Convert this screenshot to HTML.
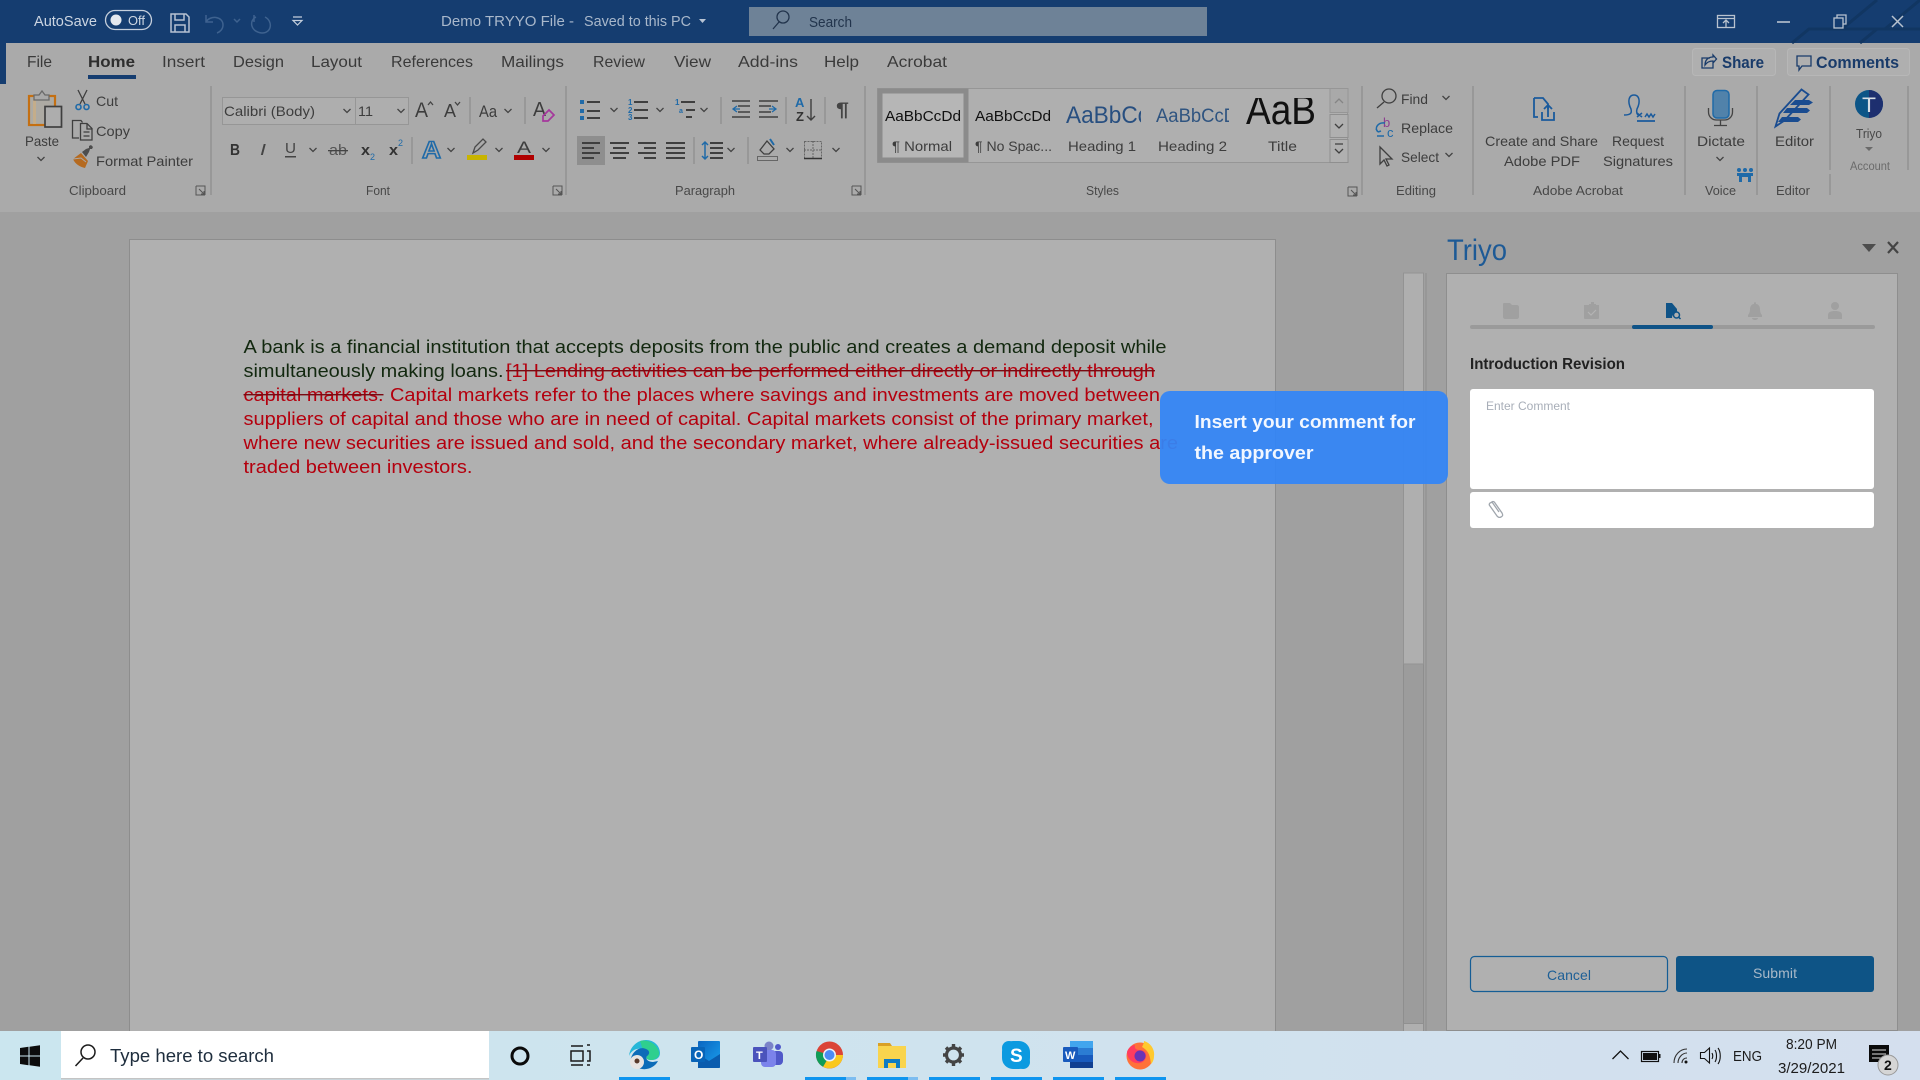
<!DOCTYPE html>
<html lang="en"><head><meta charset="utf-8"><title>Demo TRYYO File - Word</title>
<style>
html,body{margin:0;padding:0;width:1920px;height:1080px;overflow:hidden;background:#a0a0a0}
svg{display:block;position:absolute;left:0;top:0}
text{font-family:"Liberation Sans",Arial,sans-serif;white-space:pre}
.r{font-size:14px;fill:#3d3d3d}
.l{font-size:13px;fill:#484848}
.tab{font-size:16px;fill:#3a3a3a}
.ln{stroke:#3f3f3f;stroke-width:2;fill:none}
.ch{stroke:#444;stroke-width:1.3;fill:none}
.sep{stroke:#8f8f8f;stroke-width:1.3}
.d{font-size:18.8px}
.ic{fill:#a0a0a0}
</style></head><body>
<svg width="1920" height="1080" viewBox="0 0 1920 1080" xmlns="http://www.w3.org/2000/svg">
<defs>
<path id="chev" d="M-3.5-2L0 1.5 3.5-2" stroke="#444" stroke-width="1.3" fill="none"/>
<g id="lau"><path d="M0 0h9v9M0 0v9h9" fill="none" stroke="#555" stroke-width="1"/><path d="M3 3l5 5M5 8h3V5" fill="none" stroke="#555" stroke-width="1"/></g>
</defs>
<!-- base -->
<rect width="1920" height="1080" fill="#a0a0a0"/>
<rect y="43" width="1920" height="170" fill="#aaaaaa"/>
<rect y="212" width="1920" height="2" fill="#a0a0a0"/>
<rect x="0" y="0" width="1920" height="43" fill="#153d70"/>
<rect x="0" y="43" width="6" height="41" fill="#153d70"/>
<g stroke="#113662" stroke-width="3" fill="none"><path d="M1792 43l17-14H1920M1860 43l17-14M1885 29l35-29M1842 29l35-29"/></g>

<!-- title bar -->
<g fill="#cdd6e2">
<text x="34" y="26" font-size="15" textLength="63" lengthAdjust="spacingAndGlyphs">AutoSave</text>
<rect x="105.500" y="10.500" width="46" height="19" rx="9.500" fill="none" stroke="#c5cfdc" stroke-width="1.3"/>
<circle cx="116" cy="20" r="5.500" fill="#e4e8ee"/>
<text x="128" y="25" font-size="12.500" textLength="17" lengthAdjust="spacingAndGlyphs">Off</text>
</g>
<g fill="none" stroke="#b6c2d2" stroke-width="1.500"><path d="M171 14h15l3 3v15h-18zM175 14v6h9v-6M175 32v-7h10v7"/></g>
<g fill="none" stroke="#3e628f" stroke-width="1.500"><path d="M206 15v7h7M206 22c4-7 17-6 17 3 0 4-3 7-6 8M234 19l3 3 3-3M254 15v7M256 17c-7 3-6 15 6 16 10 0 11-12 3-16"/></g>
<g fill="none" stroke="#c5cfdc" stroke-width="1.200"><path d="M293 17h9M293 20.500h9l-4.500 4.500z"/></g>
<text x="441" y="26" font-size="15" fill="#a9b8cb" textLength="133" lengthAdjust="spacingAndGlyphs">Demo TRYYO File -</text>
<text x="584" y="26" font-size="15" fill="#a9b8cb" textLength="107" lengthAdjust="spacingAndGlyphs">Saved to this PC</text>
<path d="M699 19h7l-3.500 4z" fill="#b8c4d4"/>
<rect x="749" y="7" width="458" height="29" fill="#6e8297"/>
<g fill="none" stroke="#22344c" stroke-width="1.300"><circle cx="783" cy="17" r="6"/><path d="M779 22l-6 7"/></g>
<text x="809" y="27" font-size="14.500" fill="#22344c" textLength="43" lengthAdjust="spacingAndGlyphs">Search</text>
<g fill="none" stroke="#b9c3cf" stroke-width="1.300"><rect x="1717.500" y="15.500" width="17" height="12"/><path d="M1717.500 18.500h17M1726 27v-6M1723 23l3-3 3 3"/>
<path d="M1777 22h13" stroke-width="1.600"/><rect x="1834" y="18" width="9" height="10"/><path d="M1837 18v-3h9v9h-3"/>
<path d="M1892 16l11 11M1903 16l-11 11" stroke-width="1.500"/></g>

<!-- tabs -->
<g class="tab">
<text x="27" y="67" textLength="25" lengthAdjust="spacingAndGlyphs">File</text>
<text x="88" y="67" font-weight="700" fill="#2e2e2e" textLength="47" lengthAdjust="spacingAndGlyphs">Home</text>
<text x="162" y="67" textLength="43" lengthAdjust="spacingAndGlyphs">Insert</text>
<text x="233" y="67" textLength="51" lengthAdjust="spacingAndGlyphs">Design</text>
<text x="311" y="67" textLength="51" lengthAdjust="spacingAndGlyphs">Layout</text>
<text x="391" y="67" textLength="82" lengthAdjust="spacingAndGlyphs">References</text>
<text x="501" y="67" textLength="63" lengthAdjust="spacingAndGlyphs">Mailings</text>
<text x="593" y="67" textLength="52" lengthAdjust="spacingAndGlyphs">Review</text>
<text x="674" y="67" textLength="37" lengthAdjust="spacingAndGlyphs">View</text>
<text x="738" y="67" textLength="60" lengthAdjust="spacingAndGlyphs">Add-ins</text>
<text x="824" y="67" textLength="35" lengthAdjust="spacingAndGlyphs">Help</text>
<text x="887" y="67" textLength="60" lengthAdjust="spacingAndGlyphs">Acrobat</text>
</g>
<rect x="88" y="75" width="48" height="4" fill="#153d70"/>
<!-- share/comments -->
<rect x="1692.500" y="48.500" width="83" height="27" rx="3" fill="#afafaf" stroke="#b7b7b7"/>
<rect x="1787.500" y="48.500" width="122" height="27" rx="3" fill="#afafaf" stroke="#b7b7b7"/>
<g fill="none" stroke="#193b6a" stroke-width="1.300"><path d="M1710 58h-8v10h11v-6M1705 65c0-5 3-8 8-8v-2l3.500 4-3.500 4v-2c-3 0-6 1-8 4z"/><path d="M1797 56h14v10h-9l-3 4v-4h-2z"/></g>
<text x="1722" y="68" font-size="16.500" font-weight="700" fill="#193b6a" textLength="42" lengthAdjust="spacingAndGlyphs">Share</text>
<text x="1816" y="68" font-size="16.500" font-weight="700" fill="#193b6a" textLength="83" lengthAdjust="spacingAndGlyphs">Comments</text>

<!-- separators -->
<g class="sep"><path d="M211 86v109M566 86v109M865 86v109M1362 86v109M1473 86v109M1685 86v109M1757 86v109M1830 86v84M1830 174v21M1908 86v84"/></g>

<!-- Clipboard -->
<rect x="29" y="96" width="26" height="29" fill="#adaaa3" stroke="#c46f12" stroke-width="2.200"/>
<rect x="33" y="97" width="3" height="27" fill="#c4ad8a"/>
<path d="M34 100v-5h5l3-4 3 4h4v5z" fill="#a9a9a9" stroke="#6a6a6a" stroke-width="1.300"/>
<rect x="45" y="106.500" width="16.500" height="20.500" fill="#adadad" stroke="#3f3f3f" stroke-width="1.700"/>
<text x="25" y="146" class="r" textLength="34" lengthAdjust="spacingAndGlyphs">Paste</text>
<use href="#chev" x="41" y="159"/>
<g fill="none" stroke="#3f3f3f" stroke-width="1.300"><path d="M78 90l7 14M87 90l-7 14"/></g>
<g fill="none" stroke="#1f6aa8" stroke-width="1.600"><circle cx="78.500" cy="107" r="2.500"/><circle cx="86.500" cy="107" r="2.500"/></g>
<g fill="none" stroke="#3f3f3f" stroke-width="1.300"><path d="M79 138h-6.500v-17.500h8.500l1.500 2"/><path d="M80.500 123.500h6.500l5 5v11.500h-11.500z"/><path d="M87 124v5h5M83.500 132h6M83.500 136h6"/></g>
<path d="M73 159l8-6 7 8-3 7c-5-1-10-4-12-9z" fill="#b56a20"/>
<path d="M73 159l8-1 5 4" fill="none" stroke="#a9a9a9" stroke-width="1"/>
<path d="M82 152l4-3 3-1 0-2 2-1 2 2-1 2-2 0-1 3-3 5z" fill="#4d4d4d"/>
<text x="96" y="106" class="r" textLength="22" lengthAdjust="spacingAndGlyphs">Cut</text>
<text x="96" y="136" class="r" textLength="34" lengthAdjust="spacingAndGlyphs">Copy</text>
<text x="96" y="166" class="r" textLength="97" lengthAdjust="spacingAndGlyphs">Format Painter</text>
<text x="69" y="195" class="l" textLength="57" lengthAdjust="spacingAndGlyphs">Clipboard</text>
<use href="#lau" x="196" y="186"/>

<!-- Font -->
<rect x="222.500" y="97.500" width="133" height="27" fill="#aeaeae" stroke="#969696"/>
<rect x="355.500" y="97.500" width="53" height="27" fill="#aeaeae" stroke="#969696"/>
<text x="224" y="116" class="r" font-size="14.500" fill="#333" textLength="91" lengthAdjust="spacingAndGlyphs">Calibri (Body)</text>
<use href="#chev" x="347" y="111"/>
<text x="358" y="116" class="r" fill="#333" textLength="15" lengthAdjust="spacingAndGlyphs">11</text>
<use href="#chev" x="401" y="111"/>
<g fill="#3d3d3d" font-size="20">
<text x="415" y="117" font-size="21" textLength="13" lengthAdjust="spacingAndGlyphs">A</text>
<text x="444" y="117" font-size="18" textLength="12" lengthAdjust="spacingAndGlyphs">A</text>
<text x="479" y="117" font-size="17" textLength="18" lengthAdjust="spacingAndGlyphs">Aa</text>
<text x="533" y="116" font-size="20" textLength="13" lengthAdjust="spacingAndGlyphs">A</text>
</g>
<path d="M428 105l2.500-3 2.500 3" class="ch" stroke="#1f6aa8"/><path d="M455 102l2.500 3 2.500-3" class="ch" stroke="#1f6aa8"/>
<use href="#chev" x="508" y="111"/>
<path d="M543 116l6-6 5 5-6 6h-5z" fill="none" stroke="#a5379c" stroke-width="1.700"/>
<g class="sep"><path d="M470 97v27M525 97v27M412 137v27"/></g>
<text x="230" y="155" font-size="16" font-weight="700" fill="#333" textLength="10" lengthAdjust="spacingAndGlyphs">B</text>
<text x="260" y="155" font-size="16" font-style="italic" fill="#444" textLength="6" lengthAdjust="spacingAndGlyphs">I</text>
<text x="285" y="153" font-size="15" fill="#444" textLength="11" lengthAdjust="spacingAndGlyphs">U</text>
<rect x="285" y="156" width="11" height="1.500" fill="#444"/>
<use href="#chev" x="313" y="150"/>
<text x="329" y="155" font-size="15" fill="#555" textLength="18" lengthAdjust="spacingAndGlyphs">ab</text>
<rect x="328" y="150" width="20" height="1.300" fill="#444"/>
<text x="361" y="155" font-size="15" font-weight="700" fill="#333" textLength="9" lengthAdjust="spacingAndGlyphs">x</text>
<text x="370" y="160" font-size="9" fill="#1f6aa8">2</text>
<text x="389" y="155" font-size="15" font-weight="700" fill="#333" textLength="9" lengthAdjust="spacingAndGlyphs">x</text>
<text x="398" y="146" font-size="9" fill="#1f6aa8">2</text>
<text x="422" y="158" font-size="24" font-weight="700" fill="#a9a9a9" stroke="#1f6aa8" stroke-width="1.500" textLength="19" lengthAdjust="spacingAndGlyphs">A</text>
<use href="#chev" x="451" y="150"/>
<path d="M473 153l2-6 8-8 3 3-8 8z" fill="none" stroke="#4a4a4a" stroke-width="1.300"/>
<rect x="467" y="155" width="20" height="5" fill="#c8b400"/>
<use href="#chev" x="499" y="150"/>
<text x="517" y="153" font-size="17" fill="#3d3d3d" textLength="14" lengthAdjust="spacingAndGlyphs">A</text>
<rect x="514" y="155" width="20" height="5" fill="#b00000"/>
<use href="#chev" x="546" y="150"/>
<text x="366" y="195" class="l" textLength="24" lengthAdjust="spacingAndGlyphs">Font</text>
<use href="#lau" x="553" y="186"/>

<!-- Paragraph -->
<g fill="#1f6aa8"><rect x="580" y="100" width="4" height="4"/><rect x="580" y="109" width="4" height="4"/><rect x="580" y="116" width="4" height="4"/>
<text x="628" y="105" font-size="8" font-weight="700">1</text><text x="628" y="113" font-size="8" font-weight="700">2</text><text x="628" y="120" font-size="8" font-weight="700">3</text>
<text x="675" y="105" font-size="8" font-weight="700">1</text><text x="679" y="113" font-size="7" font-weight="700">a</text></g>
<g class="ln"><path d="M587 102h13M587 111h13M587 118h13M634 102h14M634 110h14M634 118h14M681 102h14M686 110h9M686 117h6"/>
<path d="M732 101h18M738 106h12M738 112h12M732 117h18M759 101h19M759 117h19M759 106h12M759 112h12" stroke-width="1.600"/></g>
<path d="M737 106l-4 3 4 3M733 109h7M772 106l4 3-4 3M769 109h7" fill="none" stroke="#1f6aa8" stroke-width="1.300"/>
<use href="#chev" x="614" y="110"/><use href="#chev" x="660" y="110"/><use href="#chev" x="704" y="110"/>
<text x="795" y="107" font-size="13" font-weight="700" fill="#1f6aa8">A</text><text x="796" y="121" font-size="13" font-weight="700" fill="#333">Z</text>
<path d="M811 99v21M807 116l4 4 4-4" fill="none" stroke="#3f3f3f" stroke-width="1.400"/>
<text x="836" y="116" font-size="19" fill="#444" font-weight="700" textLength="13" lengthAdjust="spacingAndGlyphs">¶</text>
<g class="sep"><path d="M721 97v27M786 97v27M825 97v27M694 137v27M748 137v27"/></g>
<rect x="577" y="136" width="28" height="29" fill="#8e8e8e"/>
<g class="ln" stroke-width="1.700"><path d="M582 143h18M582 148h12M582 153h18M582 158h12M610 143h19M613 148h13M610 153h19M613 158h13M638 143h18M644 148h12M638 153h18M644 158h12M666 143h19M666 148h19M666 153h19M666 158h19M710 143h13M710 148h13M710 153h13M710 158h13"/></g>
<path d="M705 142v17M702 145l3-3 3 3M702 156l3 3 3-3" fill="none" stroke="#1f6aa8" stroke-width="1.500"/>
<use href="#chev" x="731" y="150"/>
<path d="M760 150l7-9 7 8-5 5h-5z" fill="none" stroke="#3f3f3f" stroke-width="1.300"/><rect x="757.500" y="156.500" width="20" height="4" fill="none" stroke="#666"/>
<path d="M770 139l4 6" stroke="#1f6aa8" stroke-width="2"/>
<use href="#chev" x="790" y="150"/>
<g fill="none" stroke="#666" stroke-width="1" stroke-dasharray="2 1"><rect x="804.500" y="141.500" width="17" height="17"/><path d="M813 141v17M804 150h18"/></g><path d="M804 158.500h18" stroke="#333" stroke-width="1.500"/>
<use href="#chev" x="836" y="150"/>
<text x="675" y="195" class="l" textLength="60" lengthAdjust="spacingAndGlyphs">Paragraph</text>
<use href="#lau" x="852" y="186"/>

<!-- Styles -->
<rect x="877.500" y="88.500" width="470" height="74" fill="#afafaf" stroke="#969696"/>
<rect x="880" y="91" width="86" height="69" fill="#b6b6b6" stroke="#8b8b8b" stroke-width="5"/>
<text x="885" y="121" font-size="15" fill="#111" textLength="76" lengthAdjust="spacingAndGlyphs">AaBbCcDd</text>
<text x="892" y="151" class="r" fill="#505050" textLength="60" lengthAdjust="spacingAndGlyphs">¶ Normal</text>
<text x="975" y="121" font-size="15" fill="#111" textLength="76" lengthAdjust="spacingAndGlyphs">AaBbCcDd</text>
<text x="975" y="151" class="r" fill="#505050" textLength="77" lengthAdjust="spacingAndGlyphs">¶ No Spac...</text>
<svg x="1060" y="95" width="81" height="40" viewBox="1060 95 81 40"><text x="1066" y="123" font-size="24" fill="#284f80" textLength="83" lengthAdjust="spacingAndGlyphs">AaBbCc</text></svg>
<text x="1068" y="151" class="r" fill="#505050" textLength="68" lengthAdjust="spacingAndGlyphs">Heading 1</text>
<svg x="1150" y="95" width="79" height="40" viewBox="1150 95 79 40"><text x="1156" y="122" font-size="19" fill="#2f5480" textLength="81" lengthAdjust="spacingAndGlyphs">AaBbCcD</text></svg>
<text x="1158" y="151" class="r" fill="#505050" textLength="69" lengthAdjust="spacingAndGlyphs">Heading 2</text>
<svg x="1240" y="98" width="85" height="34" viewBox="1240 98 85 34"><text x="1246" y="124" font-size="42" fill="#111" textLength="70" lengthAdjust="spacingAndGlyphs">AaB</text></svg>
<text x="1268" y="151" class="r" fill="#505050" textLength="29" lengthAdjust="spacingAndGlyphs">Title</text>
<rect x="1330" y="88.500" width="18" height="24" fill="#a9a9a9" stroke="#969696"/>
<rect x="1330" y="114.500" width="18" height="23" fill="#b0b0b0" stroke="#8f8f8f"/>
<rect x="1330" y="139.500" width="18" height="23" fill="#b0b0b0" stroke="#8f8f8f"/>
<path d="M1335 103l4-4 4 4" fill="none" stroke="#858585" stroke-width="1.300"/>
<path d="M1335 124l4 4 4-4M1335 144h8M1335 149l4 4 4-4" fill="none" stroke="#3f3f3f" stroke-width="1.300"/>
<text x="1086" y="195" class="l" textLength="33" lengthAdjust="spacingAndGlyphs">Styles</text>
<use href="#lau" x="1348" y="187"/>

<!-- Editing -->
<g fill="none" stroke="#3f3f3f" stroke-width="1.300"><circle cx="1389" cy="96" r="7"/><path d="M1384 102l-7 6"/>
<path d="M1380 147v17l4-4 3 6 2-1-3-6h6z"/></g>
<text x="1383" y="127" font-size="13" fill="#8e3f90">b</text>
<text x="1387" y="137" font-size="13" fill="#1f6aa8">c</text>
<path d="M1385 123c-7-1-11 5-7 9M1378 132l-2-3M1378 132l3-1M1377 136h7" fill="none" stroke="#1f6aa8" stroke-width="1.500"/>
<g class="r"><text x="1401" y="104" textLength="27" lengthAdjust="spacingAndGlyphs">Find</text>
<text x="1401" y="133" textLength="52" lengthAdjust="spacingAndGlyphs">Replace</text>
<text x="1401" y="162" textLength="38" lengthAdjust="spacingAndGlyphs">Select</text></g>
<use href="#chev" x="1446" y="98"/><use href="#chev" x="1449" y="155"/>
<text x="1396" y="195" class="l" textLength="40" lengthAdjust="spacingAndGlyphs">Editing</text>

<!-- Acrobat -->
<g fill="none" stroke="#1a5a9c" stroke-width="1.800"><path d="M1534 98h9l5 6v5M1534 98v19h4"/><path d="M1542 112v8h12v-8M1548 117v-12M1544 109l4-4 4 4"/></g>
<g fill="none" stroke="#1a5a9c" stroke-width="1.500"><path d="M1624 115c7 0 8-2 7-6-4-8-2-14 3-14s7 6 3 14c-1 3 0 6 2 6"/><path d="M1637 113l5 4M1642 113l-5 4M1645 117l2-3 2 3 2-3 2 3 2-3"/><path d="M1637 121h18" stroke-width="1.800"/></g>
<g class="r"><text x="1485" y="146" textLength="113" lengthAdjust="spacingAndGlyphs">Create and Share</text>
<text x="1504" y="166" textLength="76" lengthAdjust="spacingAndGlyphs">Adobe PDF</text>
<text x="1612" y="146" textLength="52" lengthAdjust="spacingAndGlyphs">Request</text>
<text x="1603" y="166" textLength="70" lengthAdjust="spacingAndGlyphs">Signatures</text></g>
<text x="1533" y="195" class="l" textLength="90" lengthAdjust="spacingAndGlyphs">Adobe Acrobat</text>

<!-- Dictate -->
<rect x="1713" y="90.500" width="16" height="27.500" rx="4" fill="#5182aa" stroke="#1f6aa8" stroke-width="1.500"/>
<path d="M1708.500 108v4c0 5 4 8 8 8h8c4 0 8-3 8-8v-4M1720.500 120v5M1714 125.500h13" fill="none" stroke="#444" stroke-width="1.300"/>
<text x="1697" y="146" class="r" textLength="48" lengthAdjust="spacingAndGlyphs">Dictate</text>
<use href="#chev" x="1720" y="159"/>
<g fill="#1f6aa8"><circle cx="1739" cy="170" r="2"/><circle cx="1745" cy="170" r="2"/><circle cx="1751" cy="170" r="2"/><path d="M1737 173h16v3h-2v6h-3v-5h-6v5h-3v-6h-2z"/></g>
<text x="1705" y="195" class="l" textLength="31" lengthAdjust="spacingAndGlyphs">Voice</text>
<!-- Editor -->
<path d="M1775.500 126.500l4-13 22-24 7 5-24 26z" fill="#a9a9a9" stroke="#1a4c90" stroke-width="1.800"/>
<path d="M1795 100h14l4 2.500-4 2.500h-19zM1787 108h20l3 2.500-3 2.500h-24zM1782 117h16l3 2.500-3 2.500h-20z" fill="#1a4c90"/>
<text x="1775" y="146" class="r" textLength="39" lengthAdjust="spacingAndGlyphs">Editor</text>
<text x="1776" y="195" class="l" textLength="34" lengthAdjust="spacingAndGlyphs">Editor</text>
<!-- Triyo -->
<circle cx="1869" cy="104" r="14" fill="#0c5587"/>
<path d="M1869 90a14 14 0 0 1 0 28z" fill="#1d2f6f"/>
<text x="1862" y="112" font-size="21" fill="#d6dde4" textLength="14" lengthAdjust="spacingAndGlyphs">T</text>
<text x="1856" y="138" class="l" fill="#333" textLength="26" lengthAdjust="spacingAndGlyphs">Triyo</text>
<path d="M1865 147h8l-4 4z" fill="#6a6a6a"/>
<text x="1850" y="170" font-size="11.500" fill="#6b6b6b" textLength="40" lengthAdjust="spacingAndGlyphs">Account</text>

<!-- Document -->
<rect x="129.500" y="239.500" width="1146" height="795" fill="#b0b0b0" stroke="#8d8d8d"/>
<g class="d" fill="#12280f">
<text x="243.500" y="353" textLength="923" lengthAdjust="spacingAndGlyphs">A bank is a financial institution that accepts deposits from the public and creates a demand deposit while</text>
<text x="243.500" y="377" textLength="260" lengthAdjust="spacingAndGlyphs">simultaneously making loans.</text>
</g>
<g class="d" fill="#b4000e">
<text x="506" y="377" textLength="649" lengthAdjust="spacingAndGlyphs">[1] Lending activities can be performed either directly or indirectly through</text>
<text x="243.500" y="401" textLength="140" lengthAdjust="spacingAndGlyphs">capital markets.</text>
<text x="390" y="401" textLength="770" lengthAdjust="spacingAndGlyphs">Capital markets refer to the places where savings and investments are moved between</text>
<text x="243.500" y="425" textLength="910" lengthAdjust="spacingAndGlyphs">suppliers of capital and those who are in need of capital. Capital markets consist of the primary market,</text>
<text x="243.500" y="449" textLength="934.500" lengthAdjust="spacingAndGlyphs">where new securities are issued and sold, and the secondary market, where already-issued securities are</text>
<text x="243.500" y="473" textLength="229" lengthAdjust="spacingAndGlyphs">traded between investors.</text>
</g>
<rect x="506" y="370" width="649" height="1.400" fill="#7a0a12"/>
<rect x="243.500" y="394" width="140" height="1.400" fill="#7a0a12"/>

<!-- Scrollbar -->
<rect x="1403.500" y="273" width="20" height="758" fill="#9c9c9c" stroke="#8e8e8e"/>
<rect x="1403.500" y="273" width="20" height="391" fill="#afafaf" stroke="#939393"/>
<rect x="1403.500" y="1023.500" width="20" height="10" fill="#afafaf" stroke="#909090"/>
<path d="M1426 273v760" stroke="#8e8e8e"/>

<!-- Triyo pane -->
<text x="1447" y="260" font-size="30" fill="#1d5a96" textLength="60" lengthAdjust="spacingAndGlyphs">Triyo</text>
<path d="M1862 244h14l-7 8z" fill="#4d4d4d"/>
<path d="M1888 242l10 11M1898 242l-10 11" stroke="#444" stroke-width="2.200" fill="none"/>
<rect x="1446.500" y="273.500" width="451" height="757" fill="#b0b0b0" stroke="#8e8e8e"/>
<!-- pane tabs -->
<path d="M1503 304c0-1 1-1 2-1h5l2 2h5c1 0 2 1 2 2v10c0 1-1 2-2 2h-12c-1 0-2-1-2-2z" class="ic"/>
<path d="M1586 305h3v-1h2v-2h3v2h2v1h3v13c0 1-1 1-2 1h-11c-1 0-2 0-2-1v-13z" class="ic"/><path d="M1588 312l3 3 5-5" fill="none" stroke="#b4b4b4" stroke-width="1.200"/>
<path d="M1666 303h6l5 6v3c-3 1-5 3-5 6h-6z" fill="#0f5387"/><circle cx="1676.500" cy="315" r="3" fill="none" stroke="#0f5387" stroke-width="1.500"/><path d="M1678.500 317l2 2" stroke="#0f5387" stroke-width="1.500"/>
<path d="M1748 315c1-1 2-3 2-6 0-3 2-5 4-5 0-2 1-2 1-2s1 0 1 2c2 0 4 2 4 5 0 3 1 5 2 6v2h-14zM1752 318h6c0 1-1 2-3 2s-3-1-3-2z" class="ic"/>
<circle cx="1835" cy="306" r="4" class="ic"/><path d="M1828 319v-4c0-3 3-4 7-4s7 1 7 4v4z" class="ic"/>
<rect x="1470" y="325" width="405" height="4" rx="2" fill="#9a9a9a"/>
<rect x="1632" y="325" width="81" height="4" rx="2" fill="#0f5387"/>
<text x="1470" y="369" font-size="15.500" font-weight="700" fill="#222" textLength="155" lengthAdjust="spacingAndGlyphs">Introduction Revision</text>
<rect x="1470" y="389" width="404" height="100" rx="3" fill="#fff"/>
<text x="1486" y="410" font-size="12" fill="#a8aeb8" textLength="84" lengthAdjust="spacingAndGlyphs">Enter Comment</text>
<rect x="1470" y="492" width="404" height="36" rx="3" fill="#fff"/>
<path d="M1491 503c1-2 3-2 4 0l7 10c1 2 1 3-1 4s-3 0-4-1l-7-10c-1-1-1-2 0-3l2-1 7 10" fill="none" stroke="#a0a6ad" stroke-width="1.300"/>
<rect x="1470.500" y="956.500" width="197" height="35" rx="4" fill="none" stroke="#155d95" stroke-width="1.200"/>
<text x="1547" y="980" font-size="14" fill="#1d5f96" textLength="44" lengthAdjust="spacing">Cancel</text>
<rect x="1676" y="956" width="198" height="36" rx="3" fill="#0e5486"/>
<text x="1753" y="978" font-size="14" fill="#a9b9c8" textLength="44" lengthAdjust="spacing">Submit</text>

<!-- Tooltip -->
<rect x="1160" y="391" width="288" height="93" rx="10" fill="#3385f5" fill-opacity=".94"/>
<text x="1194.500" y="428" font-size="18.500" font-weight="700" fill="#f2f7ff" textLength="221" lengthAdjust="spacingAndGlyphs">Insert your comment for</text>
<text x="1194.500" y="459" font-size="18.500" font-weight="700" fill="#f2f7ff" textLength="119" lengthAdjust="spacingAndGlyphs">the approver</text>

<!-- Taskbar -->
<defs><linearGradient id="tb" x1="0" x2="1"><stop offset="0" stop-color="#cbe6ef"/><stop offset=".5" stop-color="#cfe3ee"/><stop offset="1" stop-color="#d4dfee"/></linearGradient>
<linearGradient id="ol" x1="0" x2="1" y2="1"><stop offset="0" stop-color="#0a65c0"/><stop offset="1" stop-color="#1aa0ee"/></linearGradient></defs>
<rect y="1031" width="1920" height="49" fill="url(#tb)"/>
<path d="M20 1048l8.500-1.200v8.700H20zM29.500 1046.700l10.500-1.500v10.300H29.500zM20 1056.500h8.500v8.700L20 1064zM29.500 1056.500H40v10.300l-10.500-1.500z" fill="#0c0c0c"/>
<rect x="61" y="1031" width="428" height="48" fill="#fff"/><rect x="61" y="1078" width="428" height="1.500" fill="#c4c4c4"/>
<g fill="none" stroke="#1b1b1b" stroke-width="1.500"><circle cx="88" cy="1052" r="7"/><path d="M83 1058l-7.500 8"/></g>
<text x="110" y="1062" font-size="18" fill="#1e2d3d" textLength="164" lengthAdjust="spacingAndGlyphs">Type here to search</text>
<circle cx="520" cy="1056" r="8" fill="none" stroke="#0a0a0a" stroke-width="3"/>
<g fill="none" stroke="#1a1a1a" stroke-width="1.500"><path d="M571 1046h12M571 1065h12M571 1051h12v10h-12z" /><path d="M587 1045h3M587 1051h3v10h-3M587 1065h3"/></g>
<!-- edge -->
<path d="M629 1056c1-10 9-16 17-16 8 0 14 6 14 13 0 5-4 7-8 7-5 0-6-2-5-4 1-1 0-6-6-7-5-1-10 2-12 7z" fill="#27b7d8"/>
<path d="M640 1041c8-2 17 3 19 11 1 5-4 8-8 8-5 0-5-2-4-4 1-1 0-5-4-6z" fill="#2fcf8e"/>
<path d="M631 1058c2-7 9-12 15-9 5 2 3 6 1 7-2 3 1 6 6 6l5-1c-3 6-10 9-16 8-7-1-12-6-11-11z" fill="#0d6cb8"/>
<circle cx="637" cy="1062" r="7" fill="#e8e4e2"/><circle cx="637" cy="1061" r="2.500" fill="#5a3a2a"/>
<!-- outlook -->
<rect x="698" y="1041" width="22" height="27" rx="1" fill="url(#ol)"/><path d="M698 1054l11 7 11-7v13c0 1-1 1-1 1h-21z" fill="#0a5cae"/><rect x="691" y="1047" width="14" height="15" rx="1" fill="#0864b8"/>
<text x="694" y="1059" font-size="12" font-weight="700" fill="#fff">O</text>
<!-- teams -->
<circle cx="769" cy="1046" r="4.500" fill="#7b83c9"/><circle cx="778" cy="1047" r="3" fill="#5059c9"/><rect x="772" y="1051" width="11" height="14" rx="4" fill="#5059c9"/><rect x="761" y="1050" width="15" height="17" rx="4" fill="#7b83eb"/><rect x="753" y="1047" width="14" height="15" rx="1" fill="#4b53bc"/>
<text x="756" y="1059" font-size="11" font-weight="700" fill="#fff">T</text>
<!-- chrome -->
<circle cx="829.500" cy="1055" r="13.500" fill="#db4437"/>
<path d="M843 1055a13.500 13.500 0 0 1-20 11.700l7-11.700z" fill="#f9c81e"/>
<path d="M816.500 1051a13.500 13.500 0 0 0 6.500 15.700l7-11.700z" fill="#0f9d58"/>
<circle cx="829.500" cy="1055" r="6.500" fill="#eaf2fa"/><circle cx="829.500" cy="1055" r="5" fill="#4c8bf5"/>
<!-- files -->
<path d="M878 1043h12l2 3h-14z" fill="#d9a026"/><rect x="878" y="1046" width="28" height="22" fill="#f9d44d"/><path d="M884 1068v-9h16v9h-4v-5h-8v5z" fill="#0f7bc4"/>
<!-- settings -->
<circle cx="953.500" cy="1055" r="7" fill="none" stroke="#444" stroke-width="3.200"/>
<path d="M953.500 1044v4M953.500 1062v4M943 1055h4M960 1055h4M946 1047.500l3 3M958 1059.500l3 3M961 1047.500l-3 3M949 1059.500l-3 3" stroke="#444" stroke-width="3.400"/>
<!-- skype -->
<rect x="1002" y="1041" width="28" height="28" rx="11" fill="#0c9ae0"/><circle cx="1009" cy="1048" r="7" fill="#0c9ae0"/><circle cx="1023" cy="1062" r="7" fill="#0c9ae0"/>
<text x="1010" y="1062" font-size="19" font-weight="700" fill="#fff">S</text>
<!-- word -->
<rect x="1070" y="1041" width="23" height="27" rx="1" fill="#2b7cd3"/><rect x="1070" y="1041" width="23" height="7" fill="#41a5ee"/><rect x="1070" y="1055" width="23" height="7" fill="#185abd"/><rect x="1070" y="1062" width="23" height="6" fill="#103f91"/><rect x="1063" y="1047" width="15" height="15" rx="1" fill="#185abd"/>
<text x="1065" y="1059" font-size="11" font-weight="700" fill="#fff">W</text>
<!-- firefox -->
<circle cx="1140" cy="1056" r="13.500" fill="#ff7139"/>
<path d="M1144 1041c7 2 11 9 10 15 0 3-1 6-3 8-1-8-2-13-9-17 1-2 2-4 2-6z" fill="#ffc92e"/>
<path d="M1127 1052c1-4 5-7 8-7-1 3 1 5 5 5s7 3 6 7c-1 5-6 7-10 6-5-1-9-5-9-11z" fill="#ff3c5e"/>
<circle cx="1140" cy="1056" r="5.500" fill="#6a34b5"/>
<!-- task underlines -->
<g fill="#0f95ef"><rect x="619" y="1077" width="51" height="3"/><rect x="805" y="1077" width="41" height="3"/><rect x="867" y="1077" width="41" height="3"/><rect x="929" y="1077" width="51" height="3"/><rect x="991" y="1077" width="51" height="3"/><rect x="1053" y="1077" width="51" height="3"/><rect x="1115" y="1077" width="51" height="3"/></g>
<g fill="#7dbdf0"><rect x="846" y="1077" width="10" height="3"/><rect x="908" y="1077" width="10" height="3"/></g>
<!-- tray -->
<path d="M1612.500 1059l8-8 8 8" fill="none" stroke="#111" stroke-width="1.300"/>
<rect x="1641.500" y="1051.500" width="17" height="10" fill="none" stroke="#111" stroke-width="1.200"/><rect x="1643" y="1053" width="14" height="7" fill="#111"/><rect x="1659" y="1054" width="1.500" height="4" fill="#111"/>
<g fill="none" stroke="#333" stroke-width="1.100"><path d="M1674 1063c0-8 6-14 13-14M1678 1063c0-5 4-10 9-10M1682 1063c0-3 2-5 5-5"/></g><circle cx="1686" cy="1062" r="1.500" fill="#111"/>
<path d="M1700.500 1052.500h4l5-4.500v15l-5-4.500h-4zM1712 1053c1 2 1 4 0 6M1715 1050c2 3 2 9 0 12M1718 1048c3 4 3 12 0 16" fill="none" stroke="#111" stroke-width="1.100"/>
<g fill="#1c1c1c" font-size="15">
<text x="1733" y="1061" textLength="29" lengthAdjust="spacingAndGlyphs">ENG</text>
<text x="1786" y="1049" textLength="51" lengthAdjust="spacingAndGlyphs">8:20 PM</text>
<text x="1778" y="1073" textLength="67" lengthAdjust="spacingAndGlyphs">3/29/2021</text>
</g>
<rect x="1869" y="1045" width="20" height="17" fill="#0a0a0a"/><path d="M1872 1050h14M1872 1054h14M1872 1058h10" stroke="#ddd" stroke-width="1"/>
<circle cx="1888" cy="1065" r="10" fill="#d5d5d5" stroke="#999"/>
<text x="1884" y="1070" font-size="14" font-weight="700" fill="#111">2</text>
</svg>
</body></html>
